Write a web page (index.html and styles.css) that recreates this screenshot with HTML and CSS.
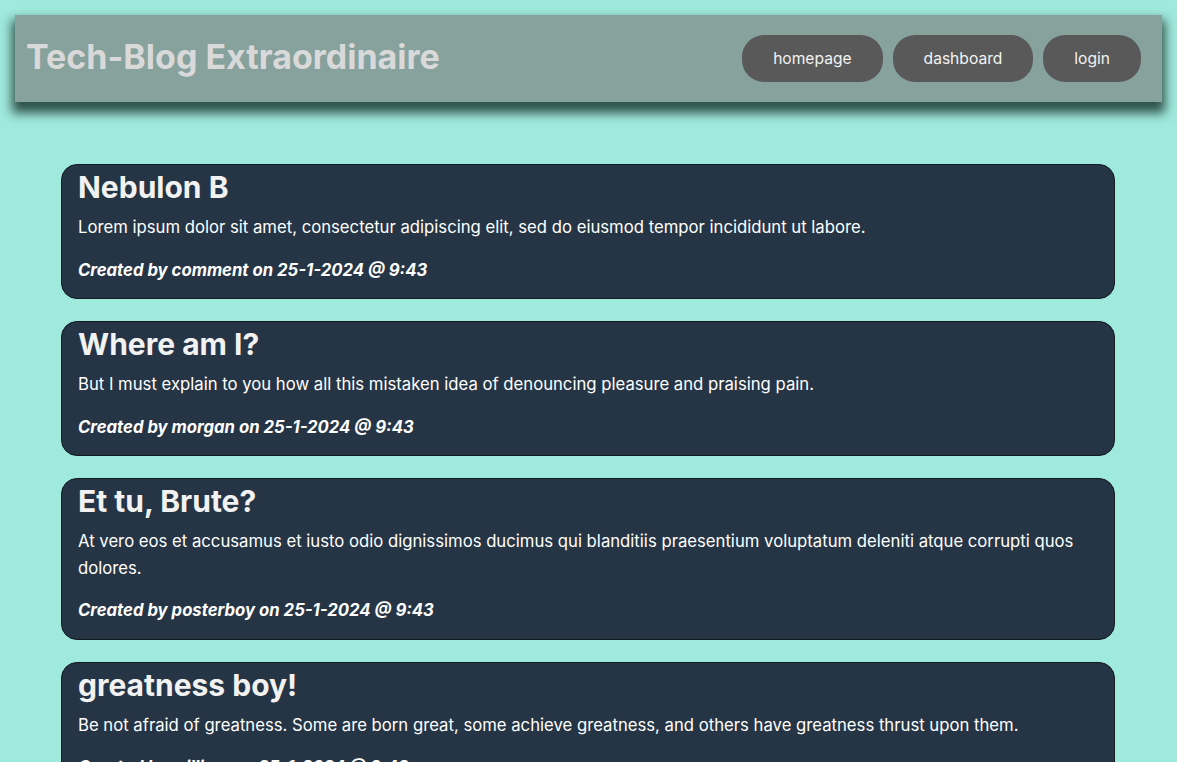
FILE: index.html
```html
<!DOCTYPE html>
<html lang="en">
<head>
<meta charset="utf-8">
<title>Tech-Blog Extraordinaire</title>
<link rel="stylesheet" href="styles.css">
</head>
<body>
<header class="site-header">
  <h1 class="site-title">Tech-Blog Extraordinaire</h1>
  <nav class="nav">
    <a class="nav-btn" href="#">homepage</a>
    <a class="nav-btn" href="#">dashboard</a>
    <a class="nav-btn" href="#">login</a>
  </nav>
</header>
<main class="posts">
  <article class="post">
    <h2 class="post-title">Nebulon B</h2>
    <p class="post-body">Lorem ipsum dolor sit amet, consectetur adipiscing elit, sed do eiusmod tempor incididunt ut labore.</p>
    <p class="post-meta">Created by comment on 25-1-2024 @ 9:43</p>
  </article>
  <article class="post">
    <h2 class="post-title">Where am I?</h2>
    <p class="post-body">But I must explain to you how all this mistaken idea of denouncing pleasure and praising pain.</p>
    <p class="post-meta">Created by morgan on 25-1-2024 @ 9:43</p>
  </article>
  <article class="post">
    <h2 class="post-title">Et tu, Brute?</h2>
    <p class="post-body">At vero eos et accusamus et iusto odio dignissimos ducimus qui blanditiis praesentium voluptatum deleniti atque corrupti quos dolores.</p>
    <p class="post-meta">Created by posterboy on 25-1-2024 @ 9:43</p>
  </article>
  <article class="post">
    <h2 class="post-title">greatness boy!</h2>
    <p class="post-body">Be not afraid of greatness. Some are born great, some achieve greatness, and others have greatness thrust upon them.</p>
    <p class="post-meta">Created by william on 25-1-2024 @ 9:43</p>
  </article>
</main>
</body>
</html>
```

FILE: styles.css
```css
html {
  background: #a0e9dd;
}
body {
  margin: 0;
  background: #a0e9dd;
  font-family: Inter, "Noto Sans", "Liberation Sans", sans-serif;
  color: #ffffff;
}
.site-header {
  margin: 15px 15px 0 15px;
  height: 87px;
  box-sizing: border-box;
  background: #87a29d;
  display: flex;
  align-items: center;
  justify-content: space-between;
  padding: 0 21px 0 11px;
  box-shadow: 0 8px 10px 3px rgba(20, 45, 38, 0.8);
}
.site-title {
  margin: 0;
  font-size: 34px;
  font-weight: 700;
  color: #d9d9d9;
  position: relative;
  top: -2px;
}
.nav {
  display: flex;
  gap: 10px;
}
.nav-btn {
  display: flex;
  align-items: center;
  justify-content: center;
  height: 47px;
  padding: 0 31px;
  border-radius: 22px;
  background: #595959;
  color: #f2f2f2;
  text-decoration: none;
  font-size: 15.6px;
  font-weight: 400;
}
.posts {
  margin: 62px 62px 0 61px;
  display: flex;
  flex-direction: column;
  gap: 22px;
}
.post {
  background: #263546;
  border: 1px solid #121a22;
  border-radius: 16px;
  padding: 3px 16px 15px 16px;
}
.post-title {
  margin: 0 0 8px 0;
  font-size: 30px;
  line-height: 38px;
  font-weight: 700;
  color: #f2f2f2;
}
.post-body {
  margin: 0 0 16px 0;
  font-size: 16.7px;
  line-height: 26.5px;
  color: #ffffff;
}
.post-meta {
  margin: 0;
  font-size: 16.7px;
  line-height: 26.5px;
  font-style: italic;
  font-weight: 700;
  color: #ffffff;
}
```
